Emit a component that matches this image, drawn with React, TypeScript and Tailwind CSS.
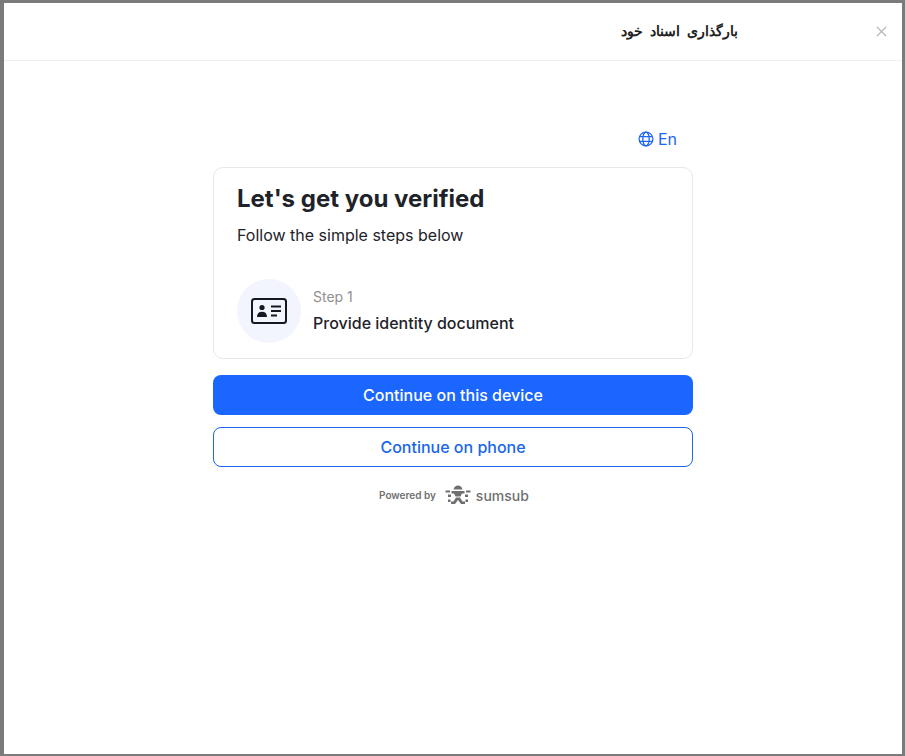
import { XIcon } from 'lucide-react';

function GlobeIcon() {
  return (
    <svg width="16" height="16" viewBox="0 0 16 16" fill="none" stroke="#1e66f5" strokeWidth="1.3">
      <circle cx="8" cy="8" r="6.9" />
      <ellipse cx="8" cy="8" rx="3.2" ry="6.9" />
      <path d="M1.6 5.6h12.8M1.6 10.4h12.8" />
    </svg>
  );
}

function IdCardIcon() {
  return (
    <svg width="36" height="26" viewBox="0 0 36 26" fill="none">
      <rect x="1" y="1" width="34" height="24" rx="2.5" stroke="#14181f" strokeWidth="2" />
      <circle cx="11" cy="9.5" r="2.6" fill="#14181f" />
      <path d="M6 19c0-3.4 2-5.2 5-5.2s5 1.8 5 5.2z" fill="#14181f" />
      <path d="M20 8.5h10M20 13h10M20 17.5h6" stroke="#14181f" strokeWidth="2" />
    </svg>
  );
}

function SumsubLogo() {
  return (
    <svg width="26" height="20" viewBox="0 0 26 20" fill="#6f6f6f">
      <path d="M8.500 4.500C9 2 11 .5 13 .5s4 1.500 4.500 4z" />
      <rect x="0.500" y="5.500" width="4.500" height="2" />
      <rect x="21" y="5.500" width="4.500" height="2" />
      <path d="M6.500 6h13v2.500h-2.500l-1.500 3h-5L9 8.500H6.500z" />
      <rect x="3" y="9.500" width="3" height="2.500" />
      <rect x="20" y="9.500" width="3" height="2.500" />
      <path d="M11 12.500h4l2.500 4H20V19h-4l-3-4-3 4H6v-2.500h2.500z" />
      <rect x="3" y="14.500" width="2.500" height="2.500" />
      <rect x="20.500" y="14.500" width="2.500" height="2.500" />
    </svg>
  );
}

function App() {
  return (
    <div className="w-[905px] h-[756px] bg-[#7b7b7b] pt-[3px] pb-[2px] pl-[4px] pr-[3px] font-['Inter',sans-serif]">
      <div className="h-full bg-white flex flex-col">
        <header className="h-[58px] shrink-0 border-b border-[#efefef] flex items-center justify-end">
          <h1
            dir="rtl"
            className="font-['Liberation_Sans',sans-serif] text-[14.4px] [word-spacing:3px] font-bold text-[#222222] mr-[135px]"
          >
            بارگذاری اسناد خود
          </h1>
          <XIcon className="w-[17px] h-[17px] text-[#b5b5b5] mr-[12px]" strokeWidth={1.7} />
        </header>

        <main className="w-[480px] ml-[209px] pt-[66px]">
          <div className="flex justify-end items-center gap-[4px] h-[24px] pr-[16px] mb-[16px] text-[16px] text-[#1e66f5]">
            <GlobeIcon />
            <span>En</span>
          </div>

          <section className="h-[192px] border border-[#e6e8ec] rounded-[10px] px-[23px] pt-[15px]">
            <h2 className="text-[24px] leading-[32px] font-bold text-[#1e2329]">Let's get you verified</h2>
            <p className="mt-[8px] text-[16px] leading-[24px] text-[#1e2329]">Follow the simple steps below</p>
            <div className="mt-[32px] flex items-center gap-[12px]">
              <div className="w-[64px] h-[64px] rounded-full bg-[#f2f5fe] flex items-center justify-center">
                <IdCardIcon />
              </div>
              <div>
                <div className="text-[14px] leading-[20px] text-[#909090]">Step 1</div>
                <div className="mt-[4px] text-[16px] leading-[24px] font-medium text-[#1e2329]">
                  Provide identity document
                </div>
              </div>
            </div>
          </section>

          <button className="block w-full h-[40px] mt-[16px] rounded-[8px] bg-[#1a66ff] text-white text-[16px] font-[550]">
            Continue on this device
          </button>
          <button className="block w-full h-[40px] mt-[12px] rounded-[8px] border border-[#1a66e8] bg-white text-[#1a66e8] text-[16px] font-medium">
            Continue on phone
          </button>

          <div className="mt-[18px] pl-[166px] flex items-center gap-[9px] h-[20px] text-[#6f6f6f]">
            <span className="text-[10px] font-semibold">Powered by</span>
            <div className="flex items-center gap-[5px]">
              <SumsubLogo />
              <span className="text-[14px] font-medium">sumsub</span>
            </div>
          </div>
        </main>
      </div>
    </div>
  );
}

export default App;
